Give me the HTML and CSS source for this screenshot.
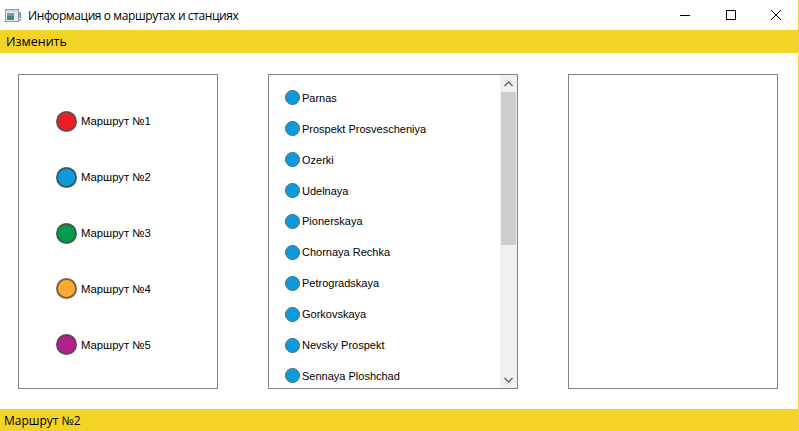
FILE: index.html
```html
<!DOCTYPE html>
<html lang="ru">
<head>
<meta charset="utf-8">
<link rel="stylesheet" href="styles.css">
</head>
<body>
<div class="window">
  <div class="titlebar">
    <svg class="app-icon" width="16" height="14" viewBox="0 0 16 14">
      <rect x="0.5" y="0.5" width="13" height="12" fill="#e8eef2" stroke="#8a9aa6"/>
      <rect x="1" y="1" width="12" height="2" fill="#c8d8e4"/>
      <rect x="2" y="4" width="7" height="7" fill="#3f8a78"/>
      <rect x="2" y="4" width="7" height="3" fill="#6aa0b8"/>
      <rect x="14.5" y="3" width="1.2" height="6" fill="#1f5fb0"/>
      <rect x="14.5" y="10" width="1.2" height="1.5" fill="#1f5fb0"/>
    </svg>
    <span class="title">Информация о маршрутах и станциях</span>
    <div class="controls">
      <span class="ctl"><svg width="10" height="10" viewBox="0 0 10 10"><path d="M0 5.5H10" stroke="#000" stroke-width="1"/></svg></span>
      <span class="ctl"><svg width="10" height="10" viewBox="0 0 10 10"><rect x="0.5" y="0.5" width="9" height="9" fill="none" stroke="#000"/></svg></span>
      <span class="ctl"><svg width="10" height="10" viewBox="0 0 10 10"><path d="M0 0L10 10M10 0L0 10" stroke="#000" stroke-width="1"/></svg></span>
    </div>
  </div>
  <div class="menubar"><span class="menu-item">Изменить</span></div>
  <div class="content">
    <div class="panel routes">
      <div class="route"><span class="dot red"></span>Маршрут №1</div>
      <div class="route"><span class="dot blue"></span>Маршрут №2</div>
      <div class="route"><span class="dot green"></span>Маршрут №3</div>
      <div class="route"><span class="dot orange"></span>Маршрут №4</div>
      <div class="route"><span class="dot purple"></span>Маршрут №5</div>
    </div>
    <div class="panel stations">
      <div class="list">
        <div class="station"><span class="sdot"></span>Parnas</div>
        <div class="station"><span class="sdot"></span>Prospekt Prosvescheniya</div>
        <div class="station"><span class="sdot"></span>Ozerki</div>
        <div class="station"><span class="sdot"></span>Udelnaya</div>
        <div class="station"><span class="sdot"></span>Pionerskaya</div>
        <div class="station"><span class="sdot"></span>Chornaya Rechka</div>
        <div class="station"><span class="sdot"></span>Petrogradskaya</div>
        <div class="station"><span class="sdot"></span>Gorkovskaya</div>
        <div class="station"><span class="sdot"></span>Nevsky Prospekt</div>
        <div class="station"><span class="sdot"></span>Sennaya Ploshchad</div>
      </div>
      <div class="scrollbar">
        <div class="arrow"><svg width="9" height="6" viewBox="0 0 9 6"><path d="M0.5 5L4.5 1L8.5 5" fill="none" stroke="#606060" stroke-width="1.4"/></svg></div>
        <div class="track"><div class="thumb"></div></div>
        <div class="arrow"><svg width="9" height="6" viewBox="0 0 9 6"><path d="M0.5 1L4.5 5L8.5 1" fill="none" stroke="#606060" stroke-width="1.4"/></svg></div>
      </div>
    </div>
    <div class="panel empty"></div>
  </div>
  <div class="statusbar">Маршрут №2</div>
</div>
</body>
</html>
```
FILE: styles.css
```css
html, body {
  margin: 0;
  padding: 0;
  background: #fff;
}
body {
  width: 799px;
  height: 431px;
  overflow: hidden;
  font-family: "Liberation Sans", Arial, sans-serif;
}
.window {
  width: 798px;
  height: 431px;
  border-right: 1px solid #f2d43a;
  display: flex;
  flex-direction: column;
}
.titlebar {
  height: 30px;
  display: flex;
  align-items: center;
  background: #fff;
}
.app-icon {
  margin-left: 5px;
  margin-top: 1px;
}
.title {
  margin-left: 7px;
  font-family: "Open Sans", "Noto Sans", sans-serif;
  font-size: 12px;
  letter-spacing: -0.4px;
  color: #000;
}
.controls {
  margin-left: auto;
  display: flex;
  height: 30px;
}
.ctl {
  width: 46px;
  display: flex;
  align-items: center;
  justify-content: center;
}
.ctl:last-child {
  width: 44px;
}
.menubar {
  height: 24px;
  background: #f3d426;
  display: flex;
  align-items: center;
}
.menu-item {
  margin-left: 6px;
  font-family: "Open Sans", "Noto Sans", sans-serif;
  font-size: 12.5px;
  color: #000;
}
.content {
  flex: 1;
  display: flex;
  padding: 21px 0 20px 18px;
  gap: 50px;
}
.panel {
  box-sizing: border-box;
  height: 315px;
  border: 1px solid #828282;
  background: #fff;
}
.routes {
  width: 200px;
  padding: 36px 0 0 37px;
  display: flex;
  flex-direction: column;
  gap: 35.8px;
}
.route {
  height: 20px;
  display: flex;
  align-items: center;
  font-size: 11.3px;
  color: #000;
}
.dot {
  box-sizing: border-box;
  width: 21px;
  height: 21px;
  border-radius: 50%;
  border: 2px solid #6a6a6a;
  margin-right: 4px;
}
.red { background: #ee1c25; border-color: #6e4a4a; }
.blue { background: #0e9bdc; border-color: #3e5a68; }
.green { background: #009b4c; border-color: #3e5e4a; }
.orange { background: #fdaa33; border-color: #7a6446; }
.purple { background: #b31f8d; border-color: #6a3e5e; }
.stations {
  width: 250px;
  display: flex;
  overflow: hidden;
}
.list {
  flex: 1;
  padding: 7px 0 0 16px;
}
.station {
  height: 30.9px;
  display: flex;
  align-items: center;
  font-size: 11px;
  color: #000;
}
.sdot {
  box-sizing: border-box;
  width: 15px;
  height: 15px;
  border-radius: 50%;
  background: #0e9bdc;
  border: 1px solid #3e6a80;
  margin-right: 2px;
}
.scrollbar {
  width: 17px;
  display: flex;
  flex-direction: column;
  background: #f0f0f0;
}
.arrow {
  height: 17px;
  display: flex;
  align-items: center;
  justify-content: center;
}
.track {
  flex: 1;
  padding: 0 1px;
}
.thumb {
  height: 153px;
  background: #cdcdcd;
}
.empty {
  width: 210px;
}
.statusbar {
  height: 22px;
  background: #f3d426;
  display: flex;
  align-items: center;
  padding-left: 4px;
  font-size: 12px;
  color: #000;
  font-family: "Open Sans", "Noto Sans", sans-serif;
}
```
